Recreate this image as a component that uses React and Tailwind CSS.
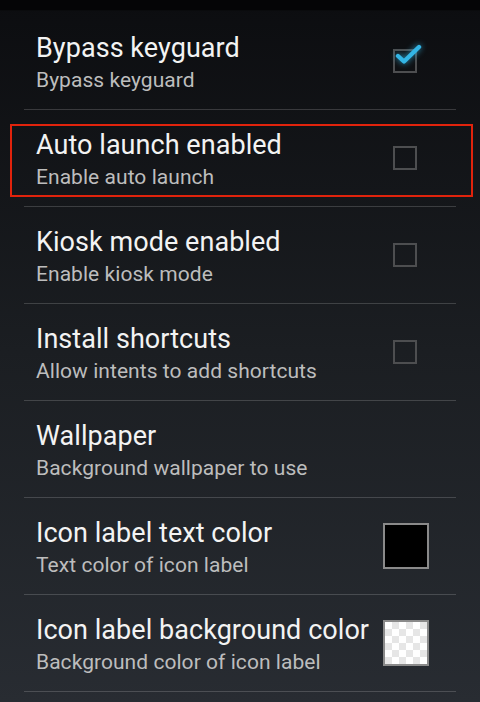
import React from "react";

const rows = [
  { title: "Bypass keyguard", sub: "Bypass keyguard", type: "checked" },
  { title: "Auto launch enabled", sub: "Enable auto launch", type: "unchecked" },
  { title: "Kiosk mode enabled", sub: "Enable kiosk mode", type: "unchecked" },
  { title: "Install shortcuts", sub: "Allow intents to add shortcuts", type: "unchecked" },
  { title: "Wallpaper", sub: "Background wallpaper to use", type: "none" },
  { title: "Icon label text color", sub: "Text color of icon label", type: "black" },
  { title: "Icon label background color", sub: "Background color of icon label", type: "checker" },
];

function CheckBox({ checked }) {
  return (
    <div className="relative w-[24px] h-[24px] border-2 border-[#4d4e50] mr-[39px]">
      {checked && (
        <svg
          className="absolute left-[-2px] top-[-9px]"
          width="30"
          height="27"
          viewBox="0 0 30 27"
          style={{ filter: "drop-shadow(0 0 3px rgba(51,181,229,0.8))" }}
        >
          <path
            d="M5 14 L11 19.5 L26 5"
            fill="none"
            stroke="#33b5e5"
            strokeWidth="4.4"
            strokeLinecap="round"
            strokeLinejoin="round"
          />
        </svg>
      )}
    </div>
  );
}

function Swatch({ kind }) {
  return (
    <div className="w-[46px] h-[46px] border-2 border-[#8a8a8a] mr-[27px] overflow-hidden">
      {kind === "black" ? (
        <div className="w-full h-full bg-black" />
      ) : (
        <div
          className="w-full h-full bg-white"
          style={{
            backgroundImage:
              "linear-gradient(45deg, #e6e6e6 25%, transparent 25%, transparent 75%, #e6e6e6 75%), linear-gradient(45deg, #e6e6e6 25%, transparent 25%, transparent 75%, #e6e6e6 75%)",
            backgroundSize: "14px 14px",
            backgroundPosition: "0 0, 7px 7px",
          }}
        />
      )}
    </div>
  );
}

export default function App() {
  return (
    <div
      className="relative w-[480px] h-[702px] overflow-hidden bg-gradient-to-b from-[#0c0d10] via-[#1b1e22] to-[#282c32]"
      style={{ fontFamily: "Roboto, 'Noto Sans', sans-serif" }}
    >
      <div className="h-[10px] bg-[#050506]" />
      <div className="h-[1px] bg-[#0a0b0d]" />
      <div className="h-[2px]" />
      <div className="px-[24px]">
        {rows.map((r, i) => (
          <div key={i}>
            <div className="flex items-center h-[96px]">
              <div className="flex-1 flex flex-col pl-[12px] pt-[2px]">
                <div className="text-[27px] leading-[32px] tracking-[0.05px] text-[#f3f3f3]">{r.title}</div>
                <div className="text-[21px] leading-[26px] tracking-[0.05px] text-[#bdbdbd] mt-[3px]">{r.sub}</div>
              </div>
              {r.type === "checked" && <CheckBox checked />}
              {r.type === "unchecked" && <CheckBox />}
              {(r.type === "black" || r.type === "checker") && <Swatch kind={r.type} />}
            </div>
            <div className="h-[1px] bg-[#ffffff2b]" />
          </div>
        ))}
      </div>
      <div className="absolute left-[10px] top-[124px] w-[463px] h-[73px] border-2 border-[#e1230c]" />
    </div>
  );
}
